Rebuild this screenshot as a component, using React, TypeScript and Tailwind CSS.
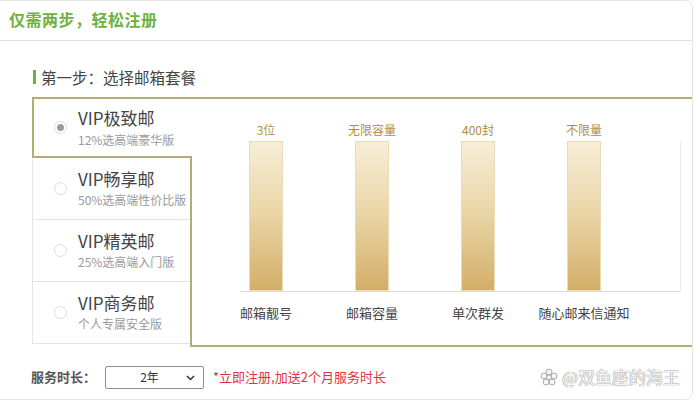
import React from "react";

const font = "font-['Noto_Sans_CJK_SC','Noto_Sans',sans-serif]";

function Radio({ checked }: { checked?: boolean }) {
  return (
    <div className="w-[13px] h-[13px] rounded-full border border-[#dcdcdc] bg-white flex items-center justify-center shrink-0">
      {checked && <div className="w-[7px] h-[7px] rounded-full bg-[#9a9a9a]" />}
    </div>
  );
}

function Item({ title, sub, checked, last }: { title: string; sub: string; checked?: boolean; last?: boolean }) {
  if (checked) {
    return (
      <div className="relative z-10 h-[61px] w-[160px] border-2 border-r-0 border-[#b2ad70] bg-white flex items-center pl-[20px] gap-[11px]">
        <Radio checked />
        <div className="flex flex-col">
          <div className="text-[17px] leading-[20px] text-[#444]">{title}</div>
          <div className="text-[12px] leading-[16px] text-[#9a9a9a] mt-[4px]">{sub}</div>
        </div>
      </div>
    );
  }
  return (
    <div className={`h-[62px] w-[158px] border-l border-b border-[#e4e4e4] flex items-center pl-[21px] gap-[11px] ${last ? "" : ""}`}>
      <Radio />
      <div className="flex flex-col">
        <div className="text-[17px] leading-[20px] text-[#444]">{title}</div>
        <div className="text-[12px] leading-[16px] text-[#9a9a9a] mt-[3px]">{sub}</div>
      </div>
    </div>
  );
}

const values = ["3位", "无限容量", "400封", "不限量"];
const labels = ["邮箱靓号", "邮箱容量", "单次群发", "随心邮来信通知"];

export default function App() {
  return (
    <div className={`w-[699px] h-[406px] bg-white overflow-hidden ${font}`}>
      <div className="w-[693px] h-[400px] border-t border-r border-b border-[#e6e6e6] rounded-r-[8px] flex flex-col">
        <div className="h-[40px] border-b border-[#e2e2e2] flex items-center pl-[9px] pb-[3px]">
          <span className="text-[16px] font-bold text-[#6db23f] tracking-[0.5px]">仅需两步，轻松注册</span>
        </div>

        <div className="mt-[27px] ml-[33px] h-[18px] flex items-center gap-[5px]">
          <div className="w-[3px] h-[14px] bg-[#6cb23c]" />
          <span className="text-[15.5px] leading-[18px] text-[#444]">第一步：选择邮箱套餐</span>
        </div>

        <div className="mt-[11px] ml-[32px] flex items-start">
          <div className="w-[158px] flex flex-col">
            <Item title="VIP极致邮" sub="12%选高端豪华版" checked />
            <Item title="VIP畅享邮" sub="50%选高端性价比版" />
            <Item title="VIP精英邮" sub="25%选高端入门版" />
            <Item title="VIP商务邮" sub="个人专属安全版" last />
          </div>
          <div className="flex-1 h-[250px] border-t-2 border-b-2 border-l-2 border-[#b2ad70] bg-white">
            <div className="pt-[23px] ml-[21px] grid grid-cols-[repeat(4,106px)]">
              {values.map((v) => (
                <div key={v} className="text-center text-[12px] leading-[16px] text-[#b38e3e]">{v}</div>
              ))}
            </div>
            <div className="mt-[3px] ml-[48px] w-[441px] h-[151px] border-b border-r border-b-[#dcdcdc] border-r-[#ececec] flex items-end pl-[9px] gap-[72px]">
              {values.map((v) => (
                <div key={v} className="w-[34px] h-[150px] border border-[#eadcb6] bg-linear-to-b from-[#f7eed8] via-[#e9d4a4] to-[#d3ae68]" />
              ))}
            </div>
            <div className="mt-[12px] ml-[21px] grid grid-cols-[repeat(4,106px)]">
              {labels.map((l) => (
                <div key={l} className="text-center text-[13px] leading-[18px] text-[#444] whitespace-nowrap">{l}</div>
              ))}
            </div>
          </div>
        </div>

        <div className="mt-[18px] h-[24px] flex items-center pl-[31px]">
          <span className="w-[74px] text-[13px] font-bold text-[#555]">服务时长：</span>
          <div className="w-[99px] h-[23px] border border-[#8f8f8f] rounded-[2px] flex items-center relative">
            <span className="flex-1 text-center text-[12px] text-[#333] pr-[10px]">2年</span>
            <svg className="absolute right-[8px] top-[8px]" width="9" height="6" viewBox="0 0 9 6">
              <path d="M1 1 L4.5 4.5 L8 1" fill="none" stroke="#333" strokeWidth="1.5" />
            </svg>
          </div>
          <span className="ml-[9px] text-[13px] text-[#e2323e]">*立即注册,加送2个月服务时长</span>
          <div className="ml-auto mr-[12px] flex items-center gap-[4px] text-[17px] text-[#f4f4f4] [text-shadow:0_0_1px_#8a8a8a,0_0_1px_#8a8a8a]">
            <svg width="18" height="18" viewBox="0 0 18 18">
              <g fill="#f4f4f4" stroke="#9a9a9a" strokeWidth="0.8">
                <circle cx="9" cy="4" r="3" />
                <circle cx="14" cy="8" r="3" />
                <circle cx="12" cy="14" r="3" />
                <circle cx="6" cy="14" r="3" />
                <circle cx="4" cy="8" r="3" />
                <circle cx="9" cy="9.5" r="2.5" />
              </g>
            </svg>
            <span>@双鱼座的海王</span>
          </div>
        </div>
      </div>
    </div>
  );
}
